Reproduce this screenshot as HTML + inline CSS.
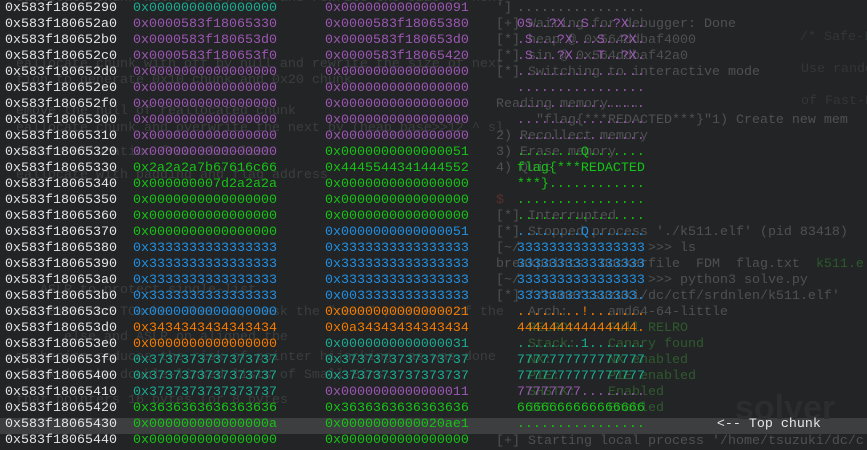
<!DOCTYPE html>
<html><head><style>
body{margin:0;width:867px;height:441px;overflow:hidden;background:#232425;font-family:"Liberation Mono",monospace;font-size:13.33px;}
.l{position:absolute;white-space:pre;line-height:16px;height:16px;}
.bg{color:#3b3e3e;}
.rg{color:#4f5252;}
.a{color:#e6e6e6}.t{color:#19ad94}.p{color:#9c57b4}.g{color:#16c416}.b{color:#2290e2}.o{color:#f47c00}.w{color:#e6e6e6}.d{color:#5a5d5d}
#hl{position:absolute;left:0;top:418px;width:867px;height:16px;background:#3d3e3f;}
</style></head><body>
<div id="hl"></div>
<div class="l bg" style="left:0;top:-9px">  eallocate chunk with off by null and rewrite the size of next</div>
<div class="l bg" style="left:0;top:57px">  eallocate chunk with off by null and rewrite the size of next</div>
<div class="l bg" style="left:0;top:73px">  tion to generate 0x10 chunk and 0x20 chunk</div>
<div class="l bg" style="left:0;top:104px">  emove the null of reallocated chunk</div>
<div class="l bg" style="left:0;top:121px">  eallocate chunk and overwrite the next by (heap_base>>12 ^ sl</div>
<div class="l bg" style="left:0;top:145px">  tcache allocation from slot-list</div>
<div class="l bg" style="left:0;top:168px">  eallocate with padding and flag address</div>
<div class="l bg" style="left:0;top:283px">     ASLR to protect single-list</div>
<div class="l bg" style="left:0;top:305px">  ast-Bins and TCache. That is, mask the "next" pointers of the</div>
<div class="l bg" style="left:0;top:330px">        else and ASLR on aligned the</div>
<div class="l bg" style="left:0;top:350px">  mechanism reduces the risk of pointer hijacking, as was done</div>
<div class="l bg" style="left:0;top:368px">  nlink in the double-linked lists of Small-Bins.</div>
<div class="l bg" style="left:0;top:393px">  that pointers 16 bytes (or 8 bytes</div>
<div class="l rg" style="left:496px;top:1px">']</div>
<div class="l rg" style="left:496px;top:17px">[+] Waiting for debugger: Done</div>
<div class="l rg" style="left:496px;top:33px">[*] heap @ 0x564ddbaf4000</div>
<div class="l rg" style="left:496px;top:49px">[*] sin @ 0x564ddbaf42a0</div>
<div class="l rg" style="left:496px;top:65px">[*] Switching to interactive mode</div>
<div class="l rg" style="left:496px;top:97px">Reading memory....</div>
<div class="l rg" style="left:496px;top:113px">     "flag{***REDACTED***}"1) Create new mem</div>
<div class="l rg" style="left:496px;top:129px">2) Recollect memory</div>
<div class="l rg" style="left:496px;top:145px">3) Erase memory</div>
<div class="l rg" style="left:496px;top:161px">4) Quit</div>
<div class="l" style="left:496px;top:193px;color:#5a2f2f">$</div>
<div class="l rg" style="left:496px;top:209px">[*] Interrupted</div>
<div class="l rg" style="left:496px;top:225px">[*] Stopped process './k511.elf' (pid 83418)</div>
<div class="l rg" style="left:496px;top:241px">[~/                >>> ls</div>
<div class="l rg" style="left:496px;top:257px">breakpoints  Dockerfile  FDM  flag.txt  <span style="color:#2c5a2c">k511.e</span></div>
<div class="l rg" style="left:496px;top:273px">[~/                >>> python3 solve.py</div>
<div class="l rg" style="left:496px;top:289px">[*] '/home/tsuzuki/dc/ctf/srdnlen/k511.elf'</div>
<div class="l rg" style="left:496px;top:305px">    Arch:     amd64-64-little</div>
<div class="l" style="left:496px;top:321px;color:#2f5a2f">    RELRO:    Full RELRO</div>
<div class="l" style="left:496px;top:337px;color:#2f5a2f">    Stack:    Canary found</div>
<div class="l" style="left:496px;top:353px;color:#2f5a2f">    NX:       NX enabled</div>
<div class="l" style="left:496px;top:369px;color:#2f5a2f">    PIE:      PIE enabled</div>
<div class="l" style="left:496px;top:385px;color:#2f5a2f">    SHSTK:    Enabled</div>
<div class="l" style="left:496px;top:401px;color:#2f5a2f">    IBT:      Enabled</div>
<div class="l rg" style="left:496px;top:434px">[+] Starting local process '/home/tsuzuki/dc/c</div>
<div class="l" style="left:735px;top:388px;font-family:'Liberation Sans',sans-serif;font-weight:bold;font-size:34px;line-height:40px;height:40px;color:#2c2d2e">solver</div>
<div class="l" style="left:800px;top:30px;color:#333636">/* Safe-Link</div>
<div class="l" style="left:785px;top:62px;color:#333636">  Use rando</div>
<div class="l" style="left:785px;top:94px;color:#333636">  of Fast-B</div>

<div class="l" style="left:5px;top:1px"><span class="a">0x583f18065290</span>  <span class="t">0x0000000000000000</span>      <span class="p">0x0000000000000091</span>      <span class="d">................</span></div>
<div class="l" style="left:5px;top:17px"><span class="a">0x583f180652a0</span>  <span class="p">0x0000583f18065330</span>      <span class="p">0x0000583f18065380</span>      <span class="p">0S..?X..S...?X..</span></div>
<div class="l" style="left:5px;top:33px"><span class="a">0x583f180652b0</span>  <span class="p">0x0000583f180653d0</span>      <span class="p">0x0000583f180653d0</span>      <span class="p">.S...?X...S..?X.</span></div>
<div class="l" style="left:5px;top:49px"><span class="a">0x583f180652c0</span>  <span class="p">0x0000583f180653f0</span>      <span class="p">0x0000583f18065420</span>      <span class="p">.S...?X...T..?X.</span></div>
<div class="l" style="left:5px;top:65px"><span class="a">0x583f180652d0</span>  <span class="p">0x0000000000000000</span>      <span class="p">0x0000000000000000</span>      <span class="p">................</span></div>
<div class="l" style="left:5px;top:81px"><span class="a">0x583f180652e0</span>  <span class="p">0x0000000000000000</span>      <span class="p">0x0000000000000000</span>      <span class="p">................</span></div>
<div class="l" style="left:5px;top:97px"><span class="a">0x583f180652f0</span>  <span class="p">0x0000000000000000</span>      <span class="p">0x0000000000000000</span>      <span class="p">................</span></div>
<div class="l" style="left:5px;top:113px"><span class="a">0x583f18065300</span>  <span class="p">0x0000000000000000</span>      <span class="p">0x0000000000000000</span>      <span class="p">................</span></div>
<div class="l" style="left:5px;top:129px"><span class="a">0x583f18065310</span>  <span class="p">0x0000000000000000</span>      <span class="p">0x0000000000000000</span>      <span class="p">................</span></div>
<div class="l" style="left:5px;top:145px"><span class="a">0x583f18065320</span>  <span class="p">0x0000000000000000</span>      <span class="g">0x0000000000000051</span>      <span class="g">........Q.......</span></div>
<div class="l" style="left:5px;top:161px"><span class="a">0x583f18065330</span>  <span class="g">0x2a2a2a7b67616c66</span>      <span class="g">0x4445544341444552</span>      <span class="g">flag{***REDACTED</span></div>
<div class="l" style="left:5px;top:177px"><span class="a">0x583f18065340</span>  <span class="g">0x000000007d2a2a2a</span>      <span class="g">0x0000000000000000</span>      <span class="g">***}............</span></div>
<div class="l" style="left:5px;top:193px"><span class="a">0x583f18065350</span>  <span class="g">0x0000000000000000</span>      <span class="g">0x0000000000000000</span>      <span class="g">................</span></div>
<div class="l" style="left:5px;top:209px"><span class="a">0x583f18065360</span>  <span class="g">0x0000000000000000</span>      <span class="g">0x0000000000000000</span>      <span class="g">................</span></div>
<div class="l" style="left:5px;top:225px"><span class="a">0x583f18065370</span>  <span class="g">0x0000000000000000</span>      <span class="b">0x0000000000000051</span>      <span class="b">........Q.......</span></div>
<div class="l" style="left:5px;top:241px"><span class="a">0x583f18065380</span>  <span class="b">0x3333333333333333</span>      <span class="b">0x3333333333333333</span>      <span class="b">3333333333333333</span></div>
<div class="l" style="left:5px;top:257px"><span class="a">0x583f18065390</span>  <span class="b">0x3333333333333333</span>      <span class="b">0x3333333333333333</span>      <span class="b">3333333333333333</span></div>
<div class="l" style="left:5px;top:273px"><span class="a">0x583f180653a0</span>  <span class="b">0x3333333333333333</span>      <span class="b">0x3333333333333333</span>      <span class="b">3333333333333333</span></div>
<div class="l" style="left:5px;top:289px"><span class="a">0x583f180653b0</span>  <span class="b">0x3333333333333333</span>      <span class="b">0x0033333333333333</span>      <span class="b">333333333333333.</span></div>
<div class="l" style="left:5px;top:305px"><span class="a">0x583f180653c0</span>  <span class="b">0x0000000000000000</span>      <span class="o">0x0000000000000021</span>      <span class="o">........!.......</span></div>
<div class="l" style="left:5px;top:321px"><span class="a">0x583f180653d0</span>  <span class="o">0x3434343434343434</span>      <span class="o">0x0a34343434343434</span>      <span class="o">444444444444444.</span></div>
<div class="l" style="left:5px;top:337px"><span class="a">0x583f180653e0</span>  <span class="o">0x0000000000000000</span>      <span class="t">0x0000000000000031</span>      <span class="t">........1.......</span></div>
<div class="l" style="left:5px;top:353px"><span class="a">0x583f180653f0</span>  <span class="t">0x3737373737373737</span>      <span class="t">0x3737373737373737</span>      <span class="t">7777777777777777</span></div>
<div class="l" style="left:5px;top:369px"><span class="a">0x583f18065400</span>  <span class="t">0x3737373737373737</span>      <span class="t">0x3737373737373737</span>      <span class="t">7777777777777777</span></div>
<div class="l" style="left:5px;top:385px"><span class="a">0x583f18065410</span>  <span class="t">0x3737373737373737</span>      <span class="p">0x0000000000000011</span>      <span class="p">77777777........</span></div>
<div class="l" style="left:5px;top:401px"><span class="a">0x583f18065420</span>  <span class="g">0x3636363636363636</span>      <span class="g">0x3636363636363636</span>      <span class="g">6666666666666666</span></div>
<div class="l" style="left:5px;top:417px"><span class="a">0x583f18065430</span>  <span class="g">0x000000000000000a</span>      <span class="g">0x0000000000020ae1</span>      <span class="g">................</span>         <span class="w">&lt;-- Top chunk</span></div>
<div class="l" style="left:5px;top:433px"><span class="a">0x583f18065440</span>  <span class="g">0x0000000000000000</span>      <span class="g">0x0000000000000000</span></div>
</body></html>
